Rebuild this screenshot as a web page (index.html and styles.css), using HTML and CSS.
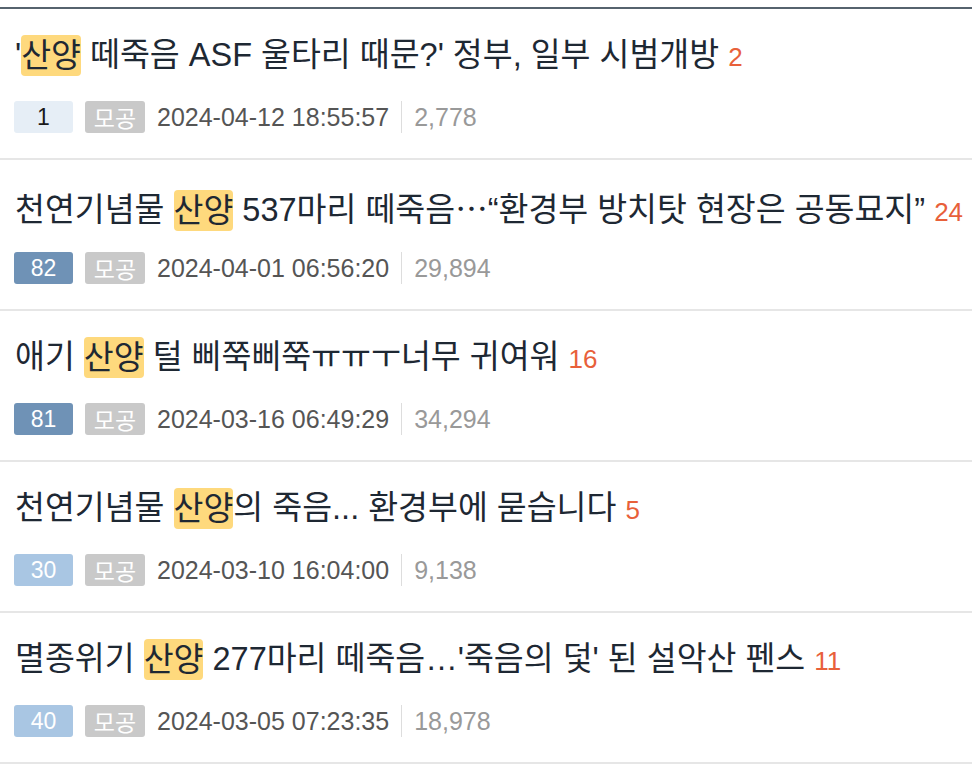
FILE: index.html
```html
<!DOCTYPE html>
<html lang="ko">
<head>
<meta charset="utf-8">
<title>산양 검색 결과</title>
<link rel="stylesheet" href="styles.css">
</head>
<body>
<ul class="list">
  <li class="item">
    <p class="title">'<mark class="hl">산양</mark> 떼죽음 ASF 울타리 때문?' 정부, 일부 시범개방 <span class="cmt">2</span></p>
    <div class="meta">
      <span class="rec rec-low">1</span>
      <span class="board">모공</span>
      <span class="date">2024-04-12 18:55:57</span>
      <span class="views">2,778</span>
    </div>
  </li>
  <li class="item">
    <p class="title">천연기념물 <mark class="hl">산양</mark> 537마리 떼죽음<span class="ell">…</span>“환경부 방치탓 현장은 공동묘지” <span class="cmt">24</span></p>
    <div class="meta">
      <span class="rec rec-high">82</span>
      <span class="board">모공</span>
      <span class="date">2024-04-01 06:56:20</span>
      <span class="views">29,894</span>
    </div>
  </li>
  <li class="item">
    <p class="title">애기 <mark class="hl">산양</mark> 털 삐쭉삐쭉ㅠㅠㅜ너무 귀여워 <span class="cmt">16</span></p>
    <div class="meta">
      <span class="rec rec-high">81</span>
      <span class="board">모공</span>
      <span class="date">2024-03-16 06:49:29</span>
      <span class="views">34,294</span>
    </div>
  </li>
  <li class="item">
    <p class="title">천연기념물 <mark class="hl">산양</mark>의 죽음... 환경부에 묻습니다 <span class="cmt">5</span></p>
    <div class="meta">
      <span class="rec rec-mid">30</span>
      <span class="board">모공</span>
      <span class="date">2024-03-10 16:04:00</span>
      <span class="views">9,138</span>
    </div>
  </li>
  <li class="item">
    <p class="title">멸종위기 <mark class="hl">산양</mark> 277마리 떼죽음…'죽음의 덫' 된 설악산 펜스 <span class="cmt">11</span></p>
    <div class="meta">
      <span class="rec rec-mid">40</span>
      <span class="board">모공</span>
      <span class="date">2024-03-05 07:23:35</span>
      <span class="views">18,978</span>
    </div>
  </li>
</ul>
</body>
</html>
```

FILE: styles.css
```css
html, body {
  margin: 0;
  padding: 0;
  background: #ffffff;
}

body {
  font-family: "Liberation Sans", "Noto Sans CJK KR", sans-serif;
}

.list {
  list-style: none;
  margin: 7px 0 0;
  padding: 0;
  border-top: 2px solid #56636e;
}

.item {
  height: 149px;
  box-sizing: content-box;
  border-bottom: 2px solid #e6e6e6;
  padding: 0;
}

.title {
  margin: 0;
  padding: 26px 0 0 15px;
  height: 41px;
  font-size: 32.5px;
  line-height: 41px;
  color: #1e2833;
  white-space: nowrap;
}

.hl {
  background: #fed97d;
  color: #1e2833;
  border-radius: 4px;
  padding: 2.5px 0;
}

/* midline ellipsis between the CJK runs */
.ell {
  font-family: "Noto Sans CJK SC", sans-serif;
}

.cmt {
  font-size: 26px;
  color: #e8603a;
}

.meta {
  display: flex;
  align-items: center;
  gap: 12px;
  margin-top: 25px;
  padding-left: 14px;
  height: 32px;
  font-size: 25px;
}

.rec,
.board {
  display: flex;
  align-items: center;
  justify-content: center;
  width: 59px;
  height: 32px;
  border-radius: 3px;
  font-size: 23px;
}

.rec-low {
  background: #e6eef6;
  color: #1a1a1a;
}

.rec-high {
  background: #6f92b6;
  color: #ffffff;
}

.rec-mid {
  background: #a9c6e3;
  color: #ffffff;
}

.board {
  width: 60px;
  background: #c9c9c9;
  color: #ffffff;
}

.date {
  color: #555555;
}

.views {
  display: flex;
  align-items: center;
  height: 32px;
  padding-left: 12px;
  border-left: 1px solid #dddddd;
  color: #999999;
}
```
